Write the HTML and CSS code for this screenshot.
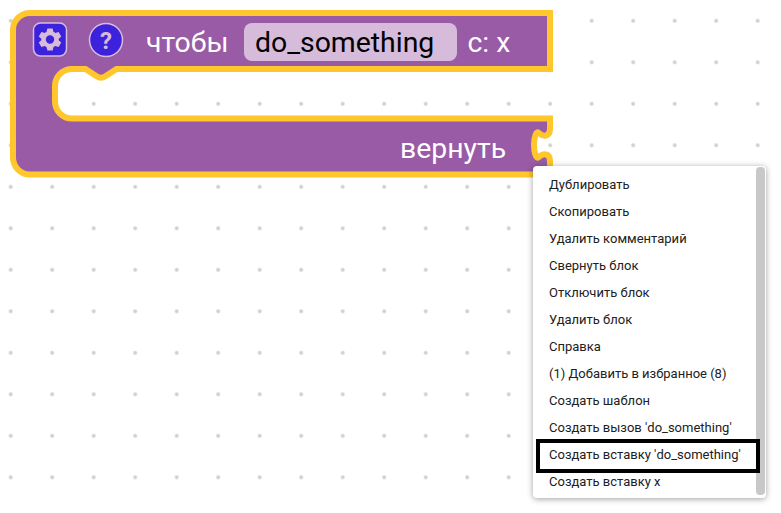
FILE: index.html
```html
<!DOCTYPE html>
<html lang="ru">
<head>
<meta charset="utf-8">
<title>Блок процедуры</title>
<link rel="stylesheet" href="styles.css">
</head>
<body>
<main class="workspace">
  <svg class="canvas" width="781" height="513" viewBox="0 0 781 513">
    <defs>
      <pattern id="dots" x="10.7" y="20.8" width="41.5" height="41.5" patternUnits="userSpaceOnUse">
        <circle class="dot" cx="0" cy="0" r="1.9"/>
        <circle class="dot" cx="41.5" cy="0" r="1.9"/>
        <circle class="dot" cx="0" cy="41.5" r="1.9"/>
        <circle class="dot" cx="41.5" cy="41.5" r="1.9"/>
      </pattern>
    </defs>
    <rect width="781" height="513" fill="url(#dots)"/>
    <path class="block" d="M30 13H550V69H116.500L105 76.500Q101 79 97 76.500L85.500 69H72A17 17 0 0 0 55 86V101.500A17 17 0 0 0 72 118.500H550V129C550 137 543 137 539 133C536 130 534 138 534 145C534 152 536 160 539 157C543 153 550 153 550 161V174.500H30A17 17 0 0 1 13 157.500V30A17 17 0 0 1 30 13Z"/>
    <rect class="icon-bg" x="33.500" y="23" width="33" height="33" rx="7"/>
    <g transform="translate(50 39.500) scale(1.05)">
      <path class="icon-fg" fill-rule="evenodd" d="M-2.500-10.500H2.500L3.300-7.300A7.800 7.800 0 0 1 5-6.300L8.200-7.200L10.700-2.900L8.300-.7A7.800 7.800 0 0 1 8.300 .7L10.700 2.900L8.200 7.200L5 6.300A7.800 7.800 0 0 1 3.300 7.300L2.500 10.500H-2.500L-3.300 7.300A7.800 7.800 0 0 1 -5 6.300L-8.200 7.200L-10.700 2.900L-8.300 .7A7.800 7.800 0 0 1 -8.300-.7L-10.700-2.900L-8.200-7.200L-5-6.300A7.800 7.800 0 0 1 -3.300-7.300ZM0-4A4 4 0 1 0 0 4A4 4 0 1 0 0-4Z"/>
    </g>
    <circle class="icon-bg" cx="106" cy="40" r="16.500"/>
    <text class="icon-q" x="106" y="49">?</text>
    <text class="label" x="146" y="52">чтобы</text>
    <rect class="field" x="244" y="23" width="213" height="38" rx="8"/>
    <text class="field-text" x="255" y="52">do_something</text>
    <text class="label" x="467.500" y="52">с: x</text>
    <text class="label" x="400" y="158">вернуть</text>
  </svg>

  <nav class="menu">
    <ul class="menu-list">
      <li class="menu-item">Дублировать</li>
      <li class="menu-item">Скопировать</li>
      <li class="menu-item">Удалить комментарий</li>
      <li class="menu-item">Свернуть блок</li>
      <li class="menu-item">Отключить блок</li>
      <li class="menu-item">Удалить блок</li>
      <li class="menu-item">Справка</li>
      <li class="menu-item">(1) Добавить в избранное (8)</li>
      <li class="menu-item">Создать шаблон</li>
      <li class="menu-item">Создать вызов 'do_something'</li>
      <li class="menu-item">Создать вставку 'do_something'</li>
      <li class="menu-item">Создать вставку x</li>
    </ul>
    <div class="scrollbar"></div>
    <div class="highlight"></div>
  </nav>
</main>
</body>
</html>
```

FILE: styles.css
```css
html, body {
  margin: 0;
  padding: 0;
  background: #fff;
}

.workspace {
  position: relative;
  width: 781px;
  height: 513px;
  overflow: hidden;
  font-family: Roboto, "Liberation Sans", sans-serif;
}

.canvas {
  position: absolute;
  left: 0;
  top: 0;
  display: block;
}

.dot { fill: #cfcfcf; }

.block {
  fill: #995ba5;
  stroke: #ffc72c;
  stroke-width: 6px;
  stroke-linejoin: miter;
}

.icon-bg {
  fill: #3d22dd;
  stroke: #d6bbdb;
  stroke-width: 1.5px;
}

.icon-fg { fill: #d6bbdb; }

.icon-q {
  fill: #d6bbdb;
  font-size: 24px;
  font-weight: 700;
  text-anchor: middle;
}

.label {
  fill: #fff;
  font-size: 28.4px;
}

.field { fill: #d6bbdb; }

.field-text {
  fill: #000;
  font-size: 28.4px;
}

.menu {
  position: absolute;
  left: 533px;
  top: 166px;
  width: 233px;
  height: 332px;
  background: #fff;
  border-radius: 4px;
  box-shadow: 0 1px 6px rgba(0, 0, 0, 0.38);
  display: flex;
}

.menu-list {
  list-style: none;
  margin: 0;
  padding: 5px 0 0;
  flex: 1;
}

.menu-item {
  height: 27px;
  line-height: 27px;
  padding-left: 16px;
  font-size: 13px;
  color: #212121;
  white-space: nowrap;
}

.scrollbar {
  width: 9px;
  margin: 1px 1px 3px 0;
  background: #c8c8c8;
  border-radius: 4px;
}

.highlight {
  position: absolute;
  left: 3px;
  top: 273px;
  width: 216px;
  height: 26px;
  border: 4px solid #000;
}
```
